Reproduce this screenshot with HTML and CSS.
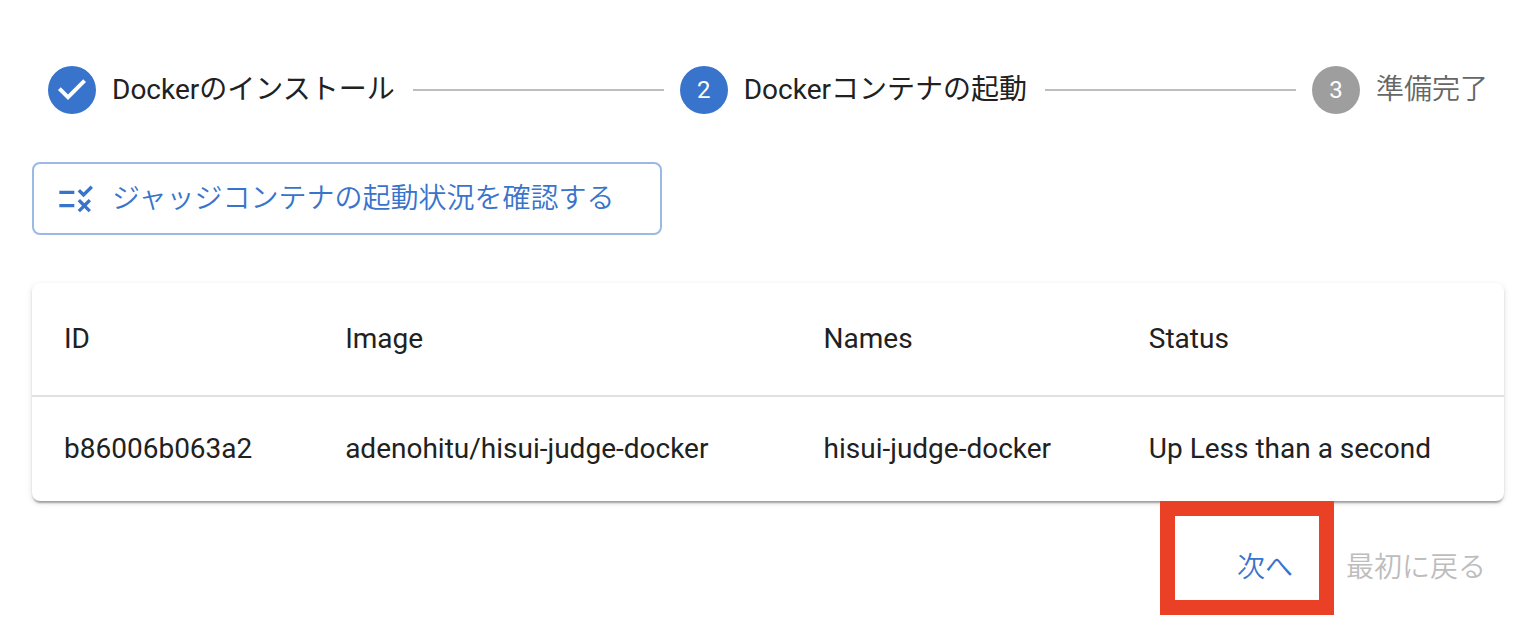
FILE: index.html
```html
<!DOCTYPE html>
<html lang="ja">
<head>
<meta charset="utf-8">
<title>Docker</title>
<link rel="stylesheet" href="styles.css">
</head>
<body>
<main class="page">
  <ol class="stepper">
    <li class="step">
      <svg class="step-icon" viewBox="0 0 24 24" aria-hidden="true"><path d="M12 0a12 12 0 1 0 0 24 12 12 0 0 0 0-24zm-2 17l-5-5 1.4-1.4 3.6 3.6 7.6-7.6L19 8z"/></svg>
      <span class="step-label">Dockerのインストール</span>
    </li>
    <li class="connector" aria-hidden="true"></li>
    <li class="step">
      <span class="step-number">2</span>
      <span class="step-label">Dockerコンテナの起動</span>
    </li>
    <li class="connector" aria-hidden="true"></li>
    <li class="step step-pending">
      <span class="step-number">3</span>
      <span class="step-label">準備完了</span>
    </li>
  </ol>
  <button class="check-button" type="button">
    <svg class="check-icon" viewBox="0 0 24 24" aria-hidden="true"><path d="M16.54 11L13 7.46l1.41-1.41 2.12 2.12 4.24-4.24 1.41 1.41L16.54 11zM11 7H2v2h9V7zm10 6.41L19.59 12 17 14.59 14.41 12 13 13.41 15.59 16 13 18.59 14.41 20 17 17.41 19.59 20 21 18.59 18.41 16 21 13.41zM11 15H2v2h9v-2z"/></svg>
    <span>ジャッジコンテナの起動状況を確認する</span>
  </button>
  <div class="card">
    <table class="containers">
      <colgroup><col class="col-id"><col class="col-image"><col class="col-names"><col></colgroup>
      <thead><tr><th>ID</th><th>Image</th><th>Names</th><th>Status</th></tr></thead>
      <tbody><tr><td>b86006b063a2</td><td>adenohitu/hisui-judge-docker</td><td>hisui-judge-docker</td><td>Up Less than a second</td></tr></tbody>
    </table>
  </div>
  <div class="actions">
    <div class="highlight"><button class="text-button" type="button">次へ</button></div>
    <button class="text-button reset-button" type="button" disabled>最初に戻る</button>
  </div>
</main>
</body>
</html>
```

FILE: styles.css
```css
* { box-sizing: border-box; }

body {
  margin: 0;
  background: #fff;
  color: #212121;
  font-family: Roboto, "Noto Sans CJK JP", sans-serif;
  font-size: 28px;
}

button { font: inherit; }

.page { padding: 66px 36px 16px 32px; }

.stepper {
  display: flex;
  align-items: center;
  margin: 0 0 48px;
  padding: 0 16px;
  height: 48px;
  list-style: none;
}

.step { display: flex; align-items: center; gap: 16px; }
.step-icon { width: 48px; height: 48px; fill: #3874cb; }
.step-label { line-height: 40px; white-space: nowrap; }

.step-number {
  width: 48px;
  height: 48px;
  border-radius: 50%;
  background: #3874cb;
  color: #fff;
  font-size: 24px;
  line-height: 48px;
  text-align: center;
}

.step-pending .step-label { color: #666; font-weight: 350; }
.step-pending .step-number { background: #9e9e9e; }

.connector { flex: 1; margin: 0 16px 0 18px; border-top: 2px solid #bdbdbd; }

.check-button {
  display: flex;
  align-items: center;
  gap: 16px;
  padding: 10px 45px 10px 22px;
  border: 2px solid #9bb9e5;
  border-radius: 8px;
  background: #fff;
  color: #3874cb;
  font-weight: 350;
  line-height: 49px;
  white-space: nowrap;
}

.check-icon { width: 40px; height: 40px; fill: currentColor; }

.card {
  margin-top: 48px;
  border-radius: 8px;
  background: #fff;
  box-shadow: 0 4px 2px -2px rgba(0,0,0,.2), 0 2px 2px rgba(0,0,0,.14), 0 2px 6px rgba(0,0,0,.12);
}

.containers { width: 100%; border-collapse: collapse; }
.containers th, .containers td { padding: 32px; text-align: left; font-weight: 400; line-height: 40px; white-space: nowrap; }
.containers th { padding: 35px 32px; border-bottom: 2px solid #e0e0e0; line-height: 42px; }
.col-id { width: 19.1%; }
.col-image { width: 32.5%; }
.col-names { width: 22.1%; }

.actions { display: flex; justify-content: flex-end; align-items: flex-end; }

.highlight {
  display: flex;
  padding: 26px 10px 6px 46px;
  border: 15px solid #ea4025;
}

.text-button {
  padding: 6px 16px;
  border: 0;
  background: none;
  color: #3874cb;
  font-weight: 350;
  line-height: 40px;
}

.reset-button { margin-bottom: 21px; padding: 6px 18px 6px 12px; }

.text-button:disabled { color: #bdbdbd; }
```
